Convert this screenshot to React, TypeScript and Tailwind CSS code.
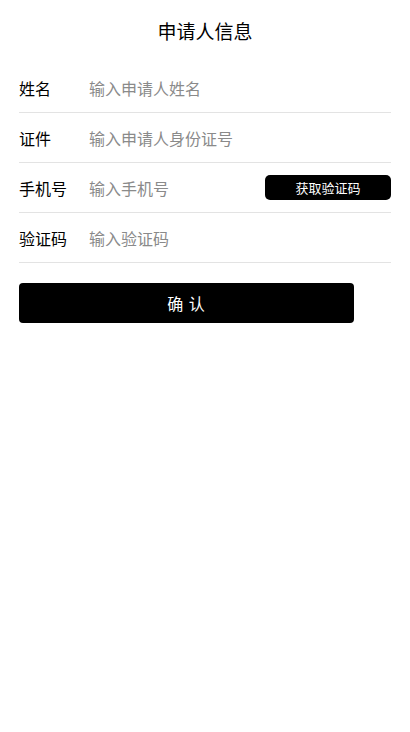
import React, { useState } from 'react'

const FONT = "font-['Noto_Sans_CJK_SC','Noto_Sans',sans-serif]"

function Row({
  label,
  placeholder,
  children,
}: {
  label: string
  placeholder: string
  children?: React.ReactNode
}) {
  const [value, setValue] = useState('')
  return (
    <div className="flex h-[50px] items-center border-b border-[#e3e3e3]">
      <span className="w-[70px] shrink-0 text-[16px] text-black">{label}</span>
      <input
        className="min-w-0 flex-1 bg-transparent text-[16px] text-black outline-none placeholder:text-[#8a8a8a]"
        placeholder={placeholder}
        value={value}
        onChange={(e) => setValue(e.target.value)}
      />
      {children}
    </div>
  )
}

export default function App() {
  return (
    <div className={`min-h-[732px] w-full bg-white ${FONT}`}>
      <header className="flex h-[63px] items-center justify-center pb-[1px]">
        <h1 className="text-[19px] font-normal text-black">申请人信息</h1>
      </header>
      <div className="flex flex-col px-[19px]">
        <Row label="姓名" placeholder="输入申请人姓名" />
        <Row label="证件" placeholder="输入申请人身份证号" />
        <Row label="手机号" placeholder="输入手机号">
          <button className="flex h-[25px] w-[126px] shrink-0 items-center justify-center rounded-[5px] bg-black text-[13px] text-white">
            获取验证码
          </button>
        </Row>
        <Row label="验证码" placeholder="输入验证码" />
        <button className="mt-5 flex h-10 w-[335px] items-center justify-center rounded-[4px] bg-black text-[16px] tracking-[1px] text-white">
          确 认
        </button>
      </div>
    </div>
  )
}
